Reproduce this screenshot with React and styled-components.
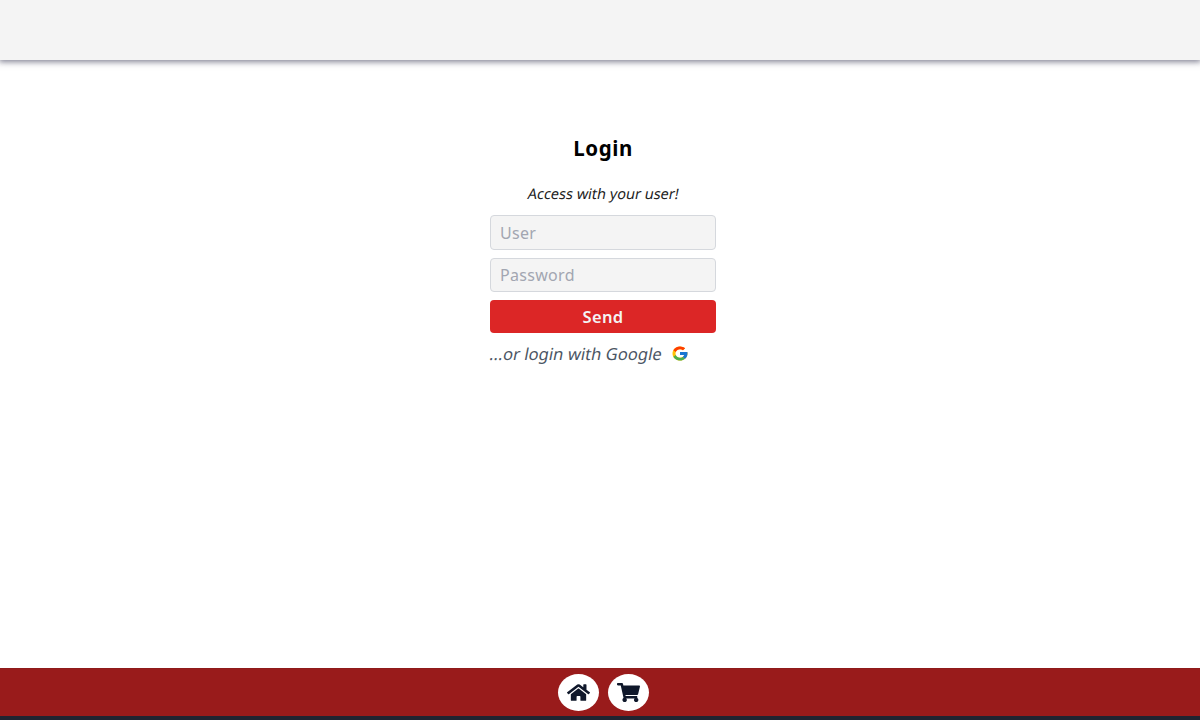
import React from "react";
import styled, { createGlobalStyle } from "styled-components";
import { FaHome, FaShoppingCart } from "react-icons/fa";
import { FcGoogle } from "react-icons/fc";

const GlobalStyle = createGlobalStyle`
  *, *::before, *::after { box-sizing: border-box; }
  body { margin: 0; background: #fff; }
  body, input, button { font-family: "Noto Sans", "Open Sans", sans-serif; }
`;

const Page = styled.div`
  display: flex;
  flex-direction: column;
  height: 100vh;
  overflow: hidden;
`;

const Header = styled.header`
  flex: none;
  height: 60px;
  background: #f4f4f4;
  box-shadow: 0 1px 6px 1px rgba(30, 30, 60, 0.55);
`;

const Main = styled.main`
  flex: 1;
  display: flex;
  flex-direction: column;
  align-items: center;
  padding: 74px 0 0 6px;
`;

const Title = styled.h1`
  margin: 0;
  font-size: 20.5px;
  line-height: 28px;
  font-weight: 700;
  letter-spacing: 0.6px;
  color: #000;
`;

const Form = styled.form`
  display: flex;
  flex-direction: column;
  width: 226px;
  margin-top: 21px;
`;

const Slanted = styled.span`
  display: inline-block;
  transform: skewX(-11deg);
`;

const Hint = styled.p`
  margin: 0 0 11px;
  text-align: center;
  white-space: nowrap;
  font-size: 14.5px;
  line-height: 21px;
  color: #222;
`;

const Field = styled.input`
  width: 100%;
  height: 34.5px;
  margin: 0 0 8px;
  padding: 1px 9px 0;
  border: 1px solid #d5d8dd;
  border-radius: 4px;
  background: #f4f4f4;
  font-size: 16px;
  letter-spacing: 0.3px;
  outline: none;
  &::placeholder { color: #a2a6b1; opacity: 1; }
`;

const SendButton = styled.button`
  height: 32.5px;
  padding: 1px 0 0;
  border: 0;
  border-radius: 4px;
  background: #dc2626;
  color: #f4f4f4;
  font-size: 16.5px;
  line-height: 32px;
  font-weight: 600;
  letter-spacing: 0.3px;
`;

const GoogleLogin = styled.button`
  display: flex;
  align-items: center;
  gap: 9px;
  margin: 9px 0 0;
  padding: 0;
  border: 0;
  background: none;
  white-space: nowrap;
  font-size: 16.5px;
  line-height: 24px;
  letter-spacing: 0.05px;
  color: #4b5563;
  svg { width: 18px; height: 17px; margin-bottom: 1px; }
`;

const Footer = styled.footer`
  flex: none;
  display: flex;
  justify-content: center;
  gap: 9px;
  height: 52px;
  padding: 5px 0 0 6px;
  background: #991b1b;
  border-top: 1px solid #8f1b1b;
  border-bottom: 4px solid #202431;
`;

const NavButton = styled.a`
  display: flex;
  align-items: center;
  justify-content: center;
  width: 41px;
  height: 37px;
  border-radius: 50%;
  background: #fff;
  color: #0f172a;
  svg { width: 23px; height: 19px; }
`;

export default function App() {
  return (
    <>
      <GlobalStyle />
      <Page>
        <Header />
        <Main>
          <Title>Login</Title>
          <Form onSubmit={(e) => e.preventDefault()}>
            <Hint><Slanted>Access with your user!</Slanted></Hint>
            <Field type="text" placeholder="User" />
            <Field type="password" placeholder="Password" />
            <SendButton type="submit">Send</SendButton>
            <GoogleLogin type="button">
              <Slanted>...or login with Google</Slanted>
              <FcGoogle preserveAspectRatio="none" />
            </GoogleLogin>
          </Form>
        </Main>
        <Footer>
          <NavButton aria-label="Home"><FaHome preserveAspectRatio="none" /></NavButton>
          <NavButton aria-label="Cart"><FaShoppingCart preserveAspectRatio="none" /></NavButton>
        </Footer>
      </Page>
    </>
  );
}
